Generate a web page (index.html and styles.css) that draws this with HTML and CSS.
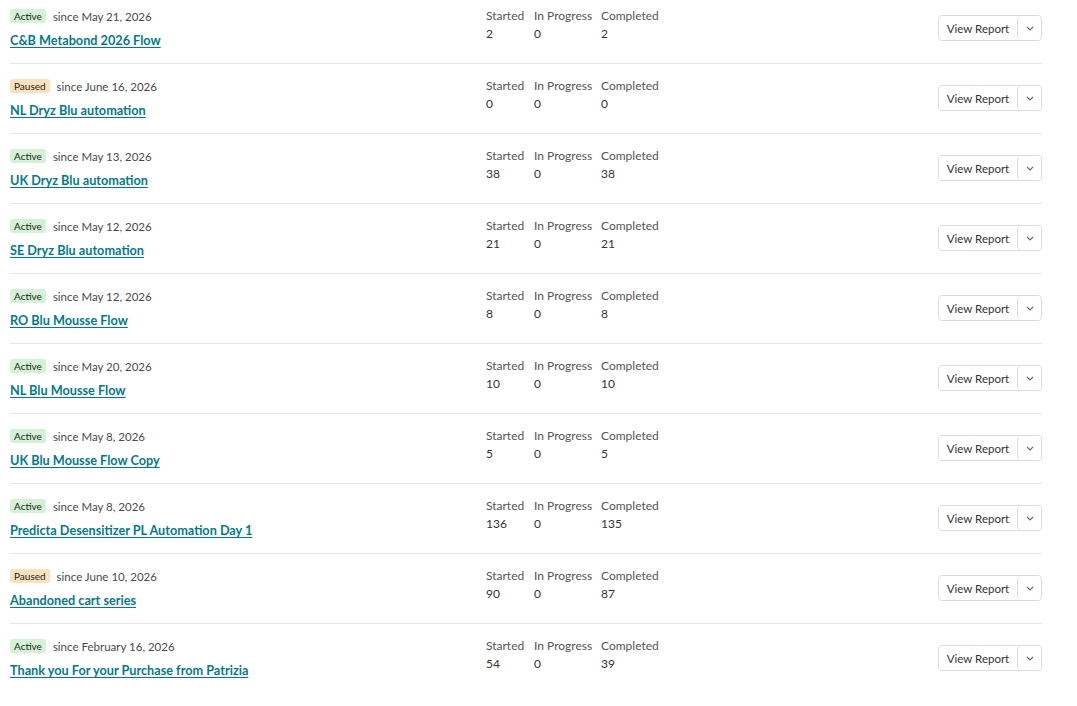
FILE: index.html
```html
<!DOCTYPE html>
<html lang="en">
<head>
    <meta charset="UTF-8">
    <meta name="viewport" content="width=device-width, initial-scale=1.0">
    <title>Automation Flows</title>
    <link rel="stylesheet" href="styles.css">
</head>
<body>

    <div class="flow-list" id="flow-list"></div>

    <script>
        // daftar flow dan angka statistiknya
        const flows = [
            { status: "Active", since: "May 21, 2026", name: "C&B Metabond 2026 Flow", started: 2, progress: 0, completed: 2 },
            { status: "Paused", since: "June 16, 2026", name: "NL Dryz Blu automation", started: 0, progress: 0, completed: 0 },
            { status: "Active", since: "May 13, 2026", name: "UK Dryz Blu automation", started: 38, progress: 0, completed: 38 },
            { status: "Active", since: "May 12, 2026", name: "SE Dryz Blu automation", started: 21, progress: 0, completed: 21 },
            { status: "Active", since: "May 12, 2026", name: "RO Blu Mousse Flow", started: 8, progress: 0, completed: 8 },
            { status: "Active", since: "May 20, 2026", name: "NL Blu Mousse Flow", started: 10, progress: 0, completed: 10 },
            { status: "Active", since: "May 8, 2026", name: "UK Blu Mousse Flow Copy", started: 5, progress: 0, completed: 5 },
            { status: "Active", since: "May 8, 2026", name: "Predicta Desensitizer PL Automation Day 1", started: 136, progress: 0, completed: 135 },
            { status: "Paused", since: "June 10, 2026", name: "Abandoned cart series", started: 90, progress: 0, completed: 87 },
            { status: "Active", since: "February 16, 2026", name: "Thank you For your Purchase from Patrizia", started: 54, progress: 0, completed: 39 }
        ];

        const list = document.getElementById("flow-list");

        flows.forEach(flow => {
            const row = document.createElement("div");
            row.className = "flow-row";
            row.innerHTML = `
                <div class="flow-info">
                    <div class="flow-meta">
                        <span class="badge badge-${flow.status.toLowerCase()}">${flow.status}</span>
                        <span class="since">since ${flow.since}</span>
                    </div>
                    <a href="#" class="flow-name"></a>
                </div>
                <div class="flow-stats">
                    <span class="stat-label">Started</span>
                    <span class="stat-label">In Progress</span>
                    <span class="stat-label">Completed</span>
                    <span class="stat-value">${flow.started}</span>
                    <span class="stat-value">${flow.progress}</span>
                    <span class="stat-value">${flow.completed}</span>
                </div>
                <div class="btn-group">
                    <button class="btn-report">View Report</button>
                    <button class="btn-more" aria-label="More">
                        <svg width="8" height="5" viewBox="0 0 8 5"><path d="M1 1l3 3 3-3" fill="none" stroke="#666" stroke-width="1.1"/></svg>
                    </button>
                </div>`;
            row.querySelector(".flow-name").textContent = flow.name;
            list.appendChild(row);
        });
    </script>

</body>
</html>
```

FILE: styles.css
```css
body {
    margin: 0;
    font-family: Lato, "Open Sans", Arial, sans-serif;
    color: #241c15;
    background: #fff;
}
.flow-list {
    width: 1032px;
    margin: -6px 0 0 10px;
}
.flow-row {
    display: flex;
    align-items: flex-start;
    height: 70px;
    box-sizing: border-box;
    padding-top: 15px;
    border-bottom: 1px solid #e5e7e6;
}
.flow-row:last-child {
    border-bottom: none;
}
.flow-info {
    width: 476px;
}
.flow-meta {
    display: flex;
    align-items: center;
    gap: 7px;
    height: 14px;
}
.badge {
    font-size: 10px;
    line-height: 14px;
    padding: 0 4px;
    border-radius: 3px;
    color: #241c15;
}
.badge-active {
    background: #d3f2d6;
}
.badge-paused {
    background: #fbe2bf;
}
.since {
    font-size: 11.5px;
    color: #4a4a4a;
}
.flow-name {
    display: inline-block;
    margin-top: 9px;
    font-size: 12.7px;
    font-weight: 700;
    color: #007c89;
    text-decoration: underline;
    text-underline-offset: 2px;
}
.flow-stats {
    display: grid;
    grid-template-columns: 48px 67px auto;
    margin-top: -2px;
    font-size: 12px;
    line-height: 17.5px;
}
.stat-label {
    color: #555;
}
.stat-value {
    color: #333;
}
.btn-group {
    display: flex;
    margin-left: auto;
    margin-top: 6px;
    height: 26px;
    border: 1px solid #dcdcdc;
    border-radius: 4px;
    box-sizing: border-box;
}
.btn-group button {
    font-family: inherit;
    font-size: 11.5px;
    color: #333;
    background: #fff;
    border: none;
    padding: 0;
    border-radius: 4px;
}
.btn-report {
    width: 78px;
}
.btn-more {
    width: 24px;
    border-left: 1px solid #dcdcdc !important;
    border-radius: 0 4px 4px 0;
    display: flex;
    align-items: center;
    justify-content: center;
}
```
